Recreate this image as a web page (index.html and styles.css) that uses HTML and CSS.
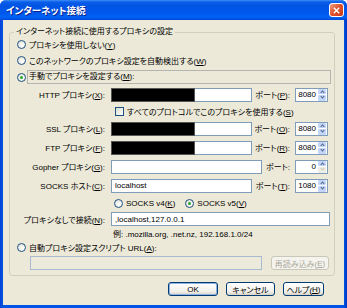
FILE: index.html
```html
<!DOCTYPE html>
<html lang="ja">
<head>
  <meta charset="UTF-8">
  <title>インターネット接続</title>
  <link rel="stylesheet" href="styles.css">
</head>
<body>
  <div class="window">
    <div class="titlebar">
      <span class="title">インターネット接続</span>
      <span class="close">
        <svg width="7" height="7" viewBox="0 0 7 7"><path d="M0.8 0.8L6.2 6.2M6.2 0.8L0.8 6.2" stroke="#fff" stroke-width="1.4"/></svg>
      </span>
    </div>

    <div class="content">
      <fieldset class="group">
        <legend>インターネット接続に使用するプロキシの設定</legend>

        <div class="row row-radio"><span class="radio"></span><span>プロキシを使用しない(<u>Y</u>)</span></div>
        <div class="row row-radio tall"><span class="radio"></span><span>このネットワークのプロキシ設定を自動検出する(<u>W</u>)</span></div>
        <div class="row row-radio"><span class="radio checked"></span><span class="focus">手動でプロキシを設定する(<u>M</u>):</span></div>

        <div class="row row-field">
          <span class="plabel">HTTP プロキシ(<u>X</u>):</span>
          <span class="field"><span class="redact"></span></span>
          <span class="portlabel">ポート(<u>P</u>):</span>
          <span class="spin"><span class="val">8080</span><span class="arrows"><span class="up"></span><span class="down"></span></span></span>
        </div>
        <div class="row row-check"><span class="check"></span><span>すべてのプロトコルでこのプロキシを使用する(<u>S</u>)</span></div>
        <div class="row row-field">
          <span class="plabel">SSL プロキシ(<u>L</u>):</span>
          <span class="field"><span class="redact"></span></span>
          <span class="portlabel">ポート(<u>O</u>):</span>
          <span class="spin"><span class="val">8080</span><span class="arrows"><span class="up"></span><span class="down"></span></span></span>
        </div>
        <div class="row row-field">
          <span class="plabel">FTP プロキシ(<u>F</u>):</span>
          <span class="field"><span class="redact"></span></span>
          <span class="portlabel">ポート(<u>R</u>):</span>
          <span class="spin"><span class="val">8080</span><span class="arrows"><span class="up"></span><span class="down"></span></span></span>
        </div>
        <div class="row row-field">
          <span class="plabel">Gopher プロキシ(<u>G</u>):</span>
          <span class="field wide"></span>
          <span class="portlabel short">ポート:</span>
          <span class="spin"><span class="val">0</span><span class="arrows"><span class="up"></span><span class="down off"></span></span></span>
        </div>
        <div class="row row-field">
          <span class="plabel">SOCKS ホスト(<u>C</u>):</span>
          <span class="field"><span class="text">localhost</span></span>
          <span class="portlabel">ポート(<u>T</u>):</span>
          <span class="spin"><span class="val">1080</span><span class="arrows"><span class="up"></span><span class="down"></span></span></span>
        </div>
        <div class="row row-socks">
          <span class="radio"></span><span class="socks4">SOCKS v4(<u>K</u>)</span>
          <span class="radio checked"></span><span>SOCKS v5(<u>V</u>)</span>
        </div>
        <div class="row row-noproxy">
          <span class="plabel">プロキシなしで接続(<u>N</u>):</span>
          <span class="field full"><span class="text">,localhost,127.0.0.1</span></span>
        </div>
        <div class="row row-hint"><span class="hint">例: .mozilla.org, .net.nz, 192.168.1.0/24</span></div>
        <div class="row row-auto"><span class="radio"></span><span>自動プロキシ設定スクリプト URL(<u>A</u>):</span></div>
        <div class="row row-url">
          <span class="field url"></span>
          <span class="btn disabled">再読み込み(<u>E</u>)</span>
        </div>
      </fieldset>

      <div class="buttons">
        <span class="btn default ok">OK</span>
        <span class="btn cancel">キャンセル</span>
        <span class="btn help">ヘルプ(<u>H</u>)</span>
      </div>
    </div>
  </div>
</body>
</html>
```

FILE: styles.css
```css
*,*::before,*::after{margin:0;padding:0;box-sizing:border-box}
html,body{width:100%;height:100%;background:#fff}
body{
  font-family:"Liberation Sans","Noto Sans CJK JP",sans-serif;
  font-size:8px;
  font-feature-settings:"palt";
  color:#000;
  overflow:hidden;
}
u{text-decoration:underline;text-underline-offset:1px}

/* ===== ウィンドウ枠 ===== */
.window{
  width:347px;height:308px;
  display:flex;flex-direction:column;
  background:linear-gradient(to right,#0842d6,#0055e5 3px,#0055e5 344px,#0033bf);
  border-radius:6px 6px 0 0;
}
.titlebar{
  height:20px;
  display:flex;align-items:center;justify-content:space-between;
  padding:0 3px 0 6px;
  border-radius:6px 6px 0 0;
  background:linear-gradient(to bottom,#3e8ff7 0,#0a5ee8 2px,#0054e3 6px,#0058ee 13px,#0063f6 17px,#0049d6 20px);
}
.title{
  color:#fff;font-weight:bold;font-size:9.5px;
  text-shadow:1px 1px 0 #0a1f8a;
}
.close{
  width:15px;height:14px;
  display:flex;align-items:center;justify-content:center;
  border:1px solid #fff;border-radius:3px;
  background:linear-gradient(135deg,#f0a085,#e0562f 45%,#c63a18);
}
.content{
  flex:1;
  margin:0 3px 3px;
  background:#ece9d8;
  display:flex;flex-direction:column;
}

/* ===== グループボックス ===== */
.group{
  margin:8px 9px 0 6px;
  border:1px solid #d0d0bf;border-radius:3px;
  padding:0 0 4px 4px;
}
.group legend{padding:0 2px;line-height:8px}

.row{display:flex;align-items:center;white-space:nowrap}
.row-radio{height:16px;padding-left:3px}
.row-radio.tall{height:17px}
.row-field{height:19px}
.row-check{height:15px;padding-left:101px}
.row-socks{height:16px;padding-left:100px}
.row-noproxy{height:16px}
.row-hint{height:12px;padding-left:99px}
.row-auto{height:16px;padding-left:3px}
.row-url{height:16px;padding-left:16px}

.radio{
  width:9px;height:9px;flex:none;
  border:1px solid #1c5180;border-radius:50%;
  background:radial-gradient(circle at 65% 65%,#fff,#dcdcd4);
  margin-right:3px;
  display:flex;align-items:center;justify-content:center;
}
.radio.checked::after{
  content:"";width:3px;height:3px;border-radius:50%;
  background:#2aa52a;
}
.check{
  width:9px;height:9px;flex:none;
  border:1px solid #1c5180;
  background:linear-gradient(135deg,#dcdcd4,#fff);
  margin-right:3px;
}
.focus{
  flex:none;width:304px;
  border:1px solid #b4b4b0;
  padding:0 1px;line-height:12px;
  margin-left:-2px;
}
.socks4{margin-right:10px}

.plabel{width:91px;text-align:right;flex:none}
.field{
  width:141px;height:14px;flex:none;
  margin-left:6px;
  border:1px solid #7f9db9;background:#fff;
  display:flex;align-items:center;
}
.field.wide{width:151px}
.field.full{width:219px}
.field.url{width:232px;margin-left:0;background:#ebeadb;border-color:#a9b9cf}
.field .text{padding-left:3px}
.redact{width:82px;height:100%;background:#000;box-shadow:0 0 0 1px #555}

.portlabel{width:38px;text-align:right;flex:none}
.portlabel.short{width:28px}
.spin{
  width:33px;height:14px;flex:none;
  margin-left:5px;
  border:1px solid #7f9db9;background:#fff;
  display:flex;
}
.spin .val{flex:1;text-align:right;padding-right:2px;line-height:12px}
.arrows{width:9px;display:flex;flex-direction:column;gap:1px;padding:0 1px 0 0}
.arrows span{
  flex:1;border-radius:1px;
  background:#c4d5fa;
  display:flex;align-items:center;justify-content:center;
}
.arrows span::after{
  content:"";width:3px;height:3px;
  border:solid #4d6185;border-width:1px 0 0 1px;
}
.arrows .up::after{transform:translateY(1px) rotate(45deg)}
.arrows .down::after{transform:translateY(-1px) rotate(225deg)}
.arrows .down.off{background:#eeede5}
.arrows .down.off::after{border-color:#c9c7ba}

/* ===== ボタン ===== */
.btn{
  height:14px;flex:none;
  display:flex;align-items:center;justify-content:center;
  border:1px solid #003c74;border-radius:3px;
  background:linear-gradient(#fff,#f1f0ea 70%,#d8d2c6);
}
.btn.default{box-shadow:inset 0 0 0 1px #8db2e3}
.btn.disabled{
  width:58px;margin-left:9px;
  border-color:#c9c7ba;color:#aca899;
  background:#f4f3ee;
}
.buttons{
  display:flex;justify-content:flex-end;gap:8px;
  padding:6px 20px 0 0;
}
.ok{width:50px}
.cancel{width:49px}
.help{width:41px}
```
